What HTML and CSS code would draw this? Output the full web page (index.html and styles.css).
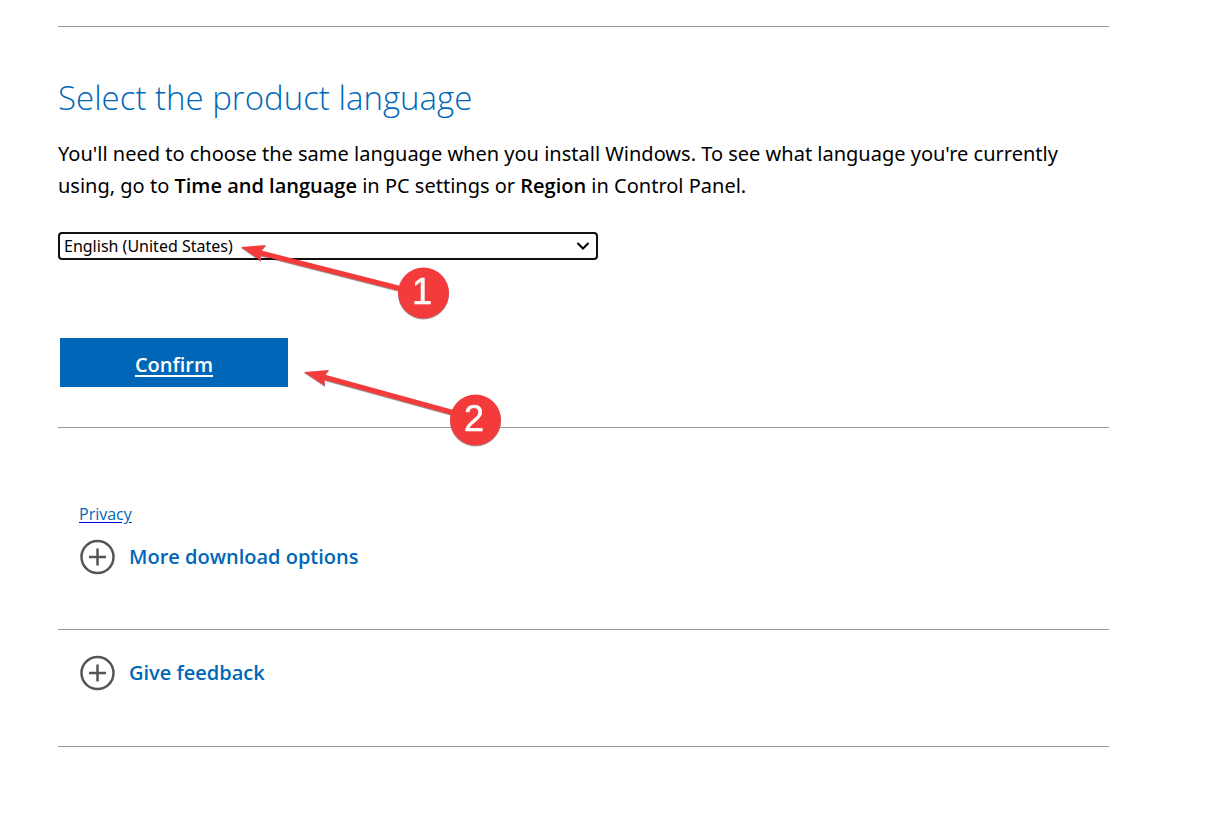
FILE: index.html
```html
<!DOCTYPE html>
<html lang="en">
<head>
<meta charset="utf-8">
<meta name="viewport" content="width=device-width, initial-scale=1">
<title>Select the product language</title>
<link rel="stylesheet" href="styles.css">
</head>
<body>
<main class="page">
  <section class="language">
    <h1 class="title">Select the product language</h1>
    <p class="intro">You'll need to choose the same language when you install Windows. To see what language you're currently using, go to <strong>Time and language</strong> in PC settings or <strong>Region</strong> in Control Panel.</p>
    <div class="picker">
      <select class="picker-select" aria-label="Product language">
        <option>English (United States)</option>
      </select>
      <svg class="picker-chevron" viewBox="0 0 14 10" aria-hidden="true"><path d="M1.500 2 7 7.500 12.500 2"/></svg>
    </div>
    <button class="confirm" type="button">Confirm</button>
  </section>
  <section class="downloads">
    <a class="privacy" href="#privacy">Privacy</a>
    <button class="expander" type="button">
      <svg class="plus" viewBox="0 0 36 36" aria-hidden="true"><circle cx="18.500" cy="18" r="16"/><path d="M18.500 9.500v17M10 18h17"/></svg>
      <span>More download options</span>
    </button>
  </section>
  <section class="feedback">
    <button class="expander" type="button">
      <svg class="plus" viewBox="0 0 36 36" aria-hidden="true"><circle cx="18.500" cy="18" r="16"/><path d="M18.500 9.500v17M10 18h17"/></svg>
      <span>Give feedback</span>
    </button>
  </section>
  <svg class="callouts" viewBox="0 0 280 220" aria-hidden="true">
    <path class="shaft" d="M17 17 170 56"/>
    <path class="head" d="M1 12 26 10 21 16 21 26Z"/>
    <circle class="badge" cx="183.500" cy="58" r="25.500"/>
    <text class="number" x="182" y="69">1</text>
    <path class="shaft" d="M80 141 222 180"/>
    <path class="head" d="M64 137 89 135 84 141 85 151Z"/>
    <circle class="badge" cx="235.500" cy="185" r="25.500"/>
    <text class="number" x="234" y="196">2</text>
  </svg>
</main>
</body>
</html>
```
FILE: styles.css
```css
* {
  box-sizing: border-box;
}

body {
  margin: 0;
  background: #fff;
  color: #000;
  font-family: "Open Sans", "Noto Sans", sans-serif;
}

.page {
  position: relative;
  margin: 26px 105px 0 58px;
  border-bottom: 1px solid #999;
}

.language,
.downloads,
.feedback {
  display: flex;
  flex-direction: column;
  align-items: flex-start;
  border-top: 1px solid #999;
}

.language {
  padding: 47px 0 40px;
}

.title {
  margin: 0;
  color: #0067b8;
  font-size: 33px;
  font-weight: 300;
  line-height: 48px;
}

.intro {
  margin: 16px 0 0;
  font-family: "Noto Sans", "Open Sans", sans-serif;
  font-size: 20px;
  line-height: 32px;
}

.intro strong {
  font-family: "Open Sans", "Noto Sans", sans-serif;
  font-weight: 600;
}

.picker {
  display: grid;
  align-items: center;
  width: 540px;
  max-width: 100%;
  margin-top: 30px;
}

.picker-select {
  grid-area: 1 / 1;
  width: 100%;
  height: 28px;
  padding: 0 32px 0 4px;
  appearance: none;
  border: 2px solid #101010;
  border-radius: 4px;
  background: #fff;
  color: #000;
  font: 16px/24px "Noto Sans", "Open Sans", sans-serif;
}

.picker-chevron {
  grid-area: 1 / 1;
  justify-self: end;
  width: 14px;
  height: 10px;
  margin-right: 8px;
  fill: none;
  stroke: #000;
  stroke-width: 2;
  pointer-events: none;
}

.confirm {
  width: 228px;
  height: 49px;
  margin: 78px 0 0 2px;
  padding: 4px 0 0;
  border: 0;
  background: #0067b8;
  color: #fff;
  font: 600 20px/32px "Open Sans", "Noto Sans", sans-serif;
  text-decoration: underline;
  text-decoration-thickness: 2px;
  text-underline-offset: 3px;
}

.downloads {
  padding: 74px 21px 54px;
}

.privacy {
  color: #0067b8;
  font-size: 16px;
  font-weight: 500;
  line-height: 24px;
  text-decoration-color: #0000ee;
  text-underline-offset: 2px;
}

.expander {
  display: flex;
  align-items: center;
  gap: 14px;
  padding: 0;
  border: 0;
  background: none;
  color: #0067b8;
  font: 600 20px/32px "Open Sans", "Noto Sans", sans-serif;
}

.downloads .expander {
  margin-top: 13px;
}

.feedback {
  padding: 25px 21px 55px;
}

.plus {
  width: 36px;
  height: 36px;
  fill: none;
  stroke: #555;
  stroke-width: 2.5;
}

.callouts {
  position: absolute;
  top: 209px;
  left: 182px;
  width: 280px;
  height: 220px;
  overflow: visible;
  pointer-events: none;
  filter: drop-shadow(0 1px 0 #00000066);
}

.shaft {
  stroke: #f43b3b;
  stroke-width: 5;
}

.head,
.badge {
  fill: #f43b3b;
}

.number {
  fill: #fff;
  stroke: #fff;
  stroke-width: 0.5;
  font: 36px "Liberation Sans", sans-serif;
  text-anchor: middle;
}
```
